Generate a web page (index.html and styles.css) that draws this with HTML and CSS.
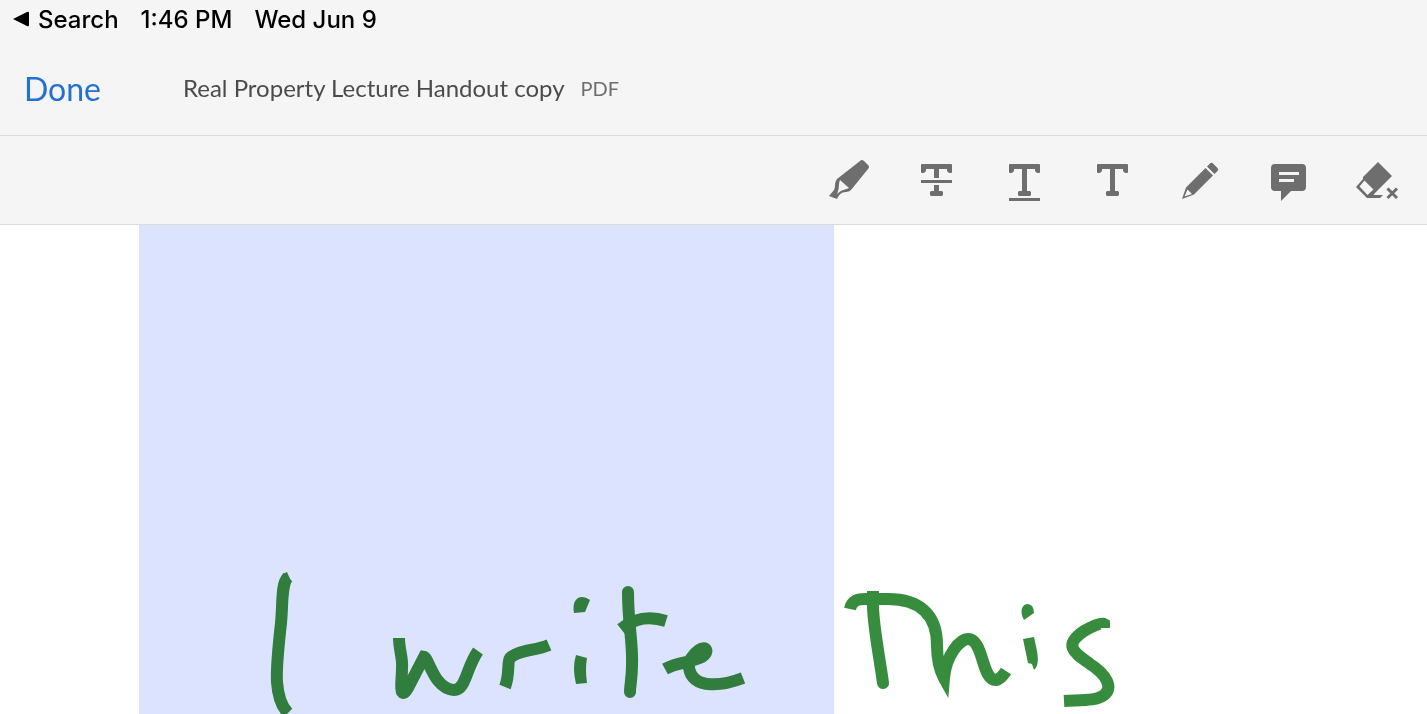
FILE: index.html
```html
<!DOCTYPE html>
<html lang="en">

<head>
    <meta charset="UTF-8">
    <meta name="viewport" content="width=device-width, initial-scale=1.0">
    <title>Real Property Lecture Handout copy</title>
    <link rel="stylesheet" href="styles.css">
</head>

<body>
    <div class="status-bar">
        <a href="#" class="back-link">
            <svg class="back-arrow" viewBox="0 0 16 16" aria-hidden="true"><path d="M0 8 L14 1 Q16 0 16 2 V14 Q16 16 14 15 Z" /></svg>
            Search
        </a>
        <span>1:46 PM</span>
        <span>Wed Jun 9</span>
    </div>

    <header class="title-bar">
        <button type="button" class="done-button">Done</button>
        <div class="file-info">
            <h1 class="file-name">Real Property Lecture Handout copy</h1>
            <span class="file-type">PDF</span>
        </div>
    </header>

    <nav class="toolbar" aria-label="Comment tools">
        <button type="button" class="tool" aria-label="Highlight">
            <svg viewBox="0 0 44 44">
                <path fill-rule="evenodd" d="M33 3 Q35 1 37 3 L41 7 Q43 9 41 11 L24 32 Q22 34 19 34 C14 34 12 37 10 41 L2 38 L7 32 C9 28 7 25 10 21 Z M13 22 C11 27 13 29 10 36 C14 32 17 32 22 30 Z" />
            </svg>
        </button>
        <button type="button" class="tool" aria-label="Strikethrough">
            <svg viewBox="0 0 44 44">
                <path d="M7 6 H36 Q37 6 37 7 V14 Q37 15 36 15 H34 L32 13 V11 H24 V20 H19 V11 H11 V13 L9 15 H7 Q6 15 6 14 V7 Q6 6 7 6 Z M6 22 H37 V25 H6 Z M19 27 H24 V33 H27 L28 34 V37 L27 38 H16 L15 37 V34 L16 33 H19 Z" />
            </svg>
        </button>
        <button type="button" class="tool" aria-label="Underline">
            <svg viewBox="0 0 44 44">
                <path d="M7 6 H36 Q37 6 37 7 V14 Q37 15 36 15 H34 L32 13 V11 H24 V33 H27 L28 34 V37 L27 38 H16 L15 37 V34 L16 33 H19 V11 H11 V13 L9 15 H7 Q6 15 6 14 V7 Q6 6 7 6 Z M6 40 H37 V43 H6 Z" />
            </svg>
        </button>
        <button type="button" class="tool" aria-label="Add text">
            <svg viewBox="0 0 44 44">
                <path d="M7 6 H36 Q37 6 37 7 V14 Q37 15 36 15 H34 L32 13 V11 H24 V33 H27 L28 34 V37 L27 38 H16 L15 37 V34 L16 33 H19 V11 H11 V13 L9 15 H7 Q6 15 6 14 V7 Q6 6 7 6 Z" />
            </svg>
        </button>
        <button type="button" class="tool" aria-label="Draw">
            <svg viewBox="0 0 44 44">
                <path fill-rule="evenodd" d="M31 5.500 Q32.500 4 34 5.500 L38.500 10 Q40 11.500 38.500 13 L35.500 16 L28 8.500 Z M26.500 10 L34 17.500 L15 36.500 L3 41 L7 29.500 Z M8.500 31.500 L5.500 38.500 L13 36 Z" />
            </svg>
        </button>
        <button type="button" class="tool" aria-label="Add comment">
            <svg viewBox="0 0 44 44">
                <path fill-rule="evenodd" d="M8 6 H35 Q39 6 39 10 V29 Q39 33 35 33 H24 L14 43 V33 H8 Q4 33 4 29 V10 Q4 6 8 6 Z M12 14 V17 H32 V14 Z M12 21 V24 H27 V21 Z" />
            </svg>
        </button>
        <button type="button" class="tool" aria-label="Erase">
            <svg viewBox="0 0 44 44">
                <path fill-rule="evenodd" d="M23 4 L37 18 L20 35 L18.500 37 H28 L25 40 H12 L1 29 L8 21 V19 Z M9.500 22.500 L4.500 28.500 L12.500 37 L18.500 31.500 Z" />
                <path class="cross" d="M32.500 30.500 L42 40 M42 30.500 L32.500 40" />
            </svg>
        </button>
    </nav>

    <main class="document">
        <div class="highlight"></div>
        <svg class="ink" viewBox="260 565 870 149" role="img" aria-label="I write This">
            <!-- I -->
            <path d="M288 577 C281 584 283 602 281 623 C278 650 276 668 277 682 C278 696 281 706 288 713" />
            <path class="blot" d="M278 587 Q281 573 287 572 L291 581 Z" />
            <!-- write -->
            <path d="M399 638 C399 650 403 658 402 668 C402 680 400 687 402 692 Q404 695 408 688 L424 657 C429 658 434 689 454 690 C466 690 466 668 478 651" />
            <path d="M505 687 C510 674 507 662 510 658 C518 650 535 651 549 645" />
            <path class="blot" d="M574 613 C572 603 576 597 582 597 Q586 597 590 600 L585 612 Z" />
            <path class="blot" d="M576 655 L587 658 Q585 669 587 683 L576 684 Q572 668 576 655 Z" />
            <path class="round" d="M628 592 C628 625 633 642 632 665 C632 678 630 686 630 692" />
            <path d="M666 621 C650 616 636 617 621 629" />
            <path d="M665 669 C678 662 690 663 702 657 C710 652 706 645 699 650 C693 654 688 661 689 668 C693 691 725 685 743 678" />
            <!-- This -->
            <path d="M850 609 C852 600 858 599 866 599 L888 599 C919 599 937 614 937 645 C937 660 939 669 944 678 C946 655 960 639 968 639 C984 639 981 680 996 680 Q1001 679 1006 671" />
            <path d="M873 591 L873 602" />
            <path class="round" d="M873 602 C872 620 880 660 883 683" />
            <path class="blot" d="M1024 620 C1019 611 1022 604 1028 604 Q1034 605 1034 613 Z" />
            <path class="blot" d="M1023 639 L1034 637 C1037 651 1041 664 1034 670 L1032 664 L1028 663 Z" />
            <path d="M1104 628 L1104 624 C1101 622 1091 627 1084 631 C1062 646 1075 653 1090 664 C1106 674 1114 688 1104 695 C1096 701 1083 700 1064 701" />
        </svg>
    </main>
</body>

</html>
```
FILE: styles.css
```css
* {
    box-sizing: border-box;
}

body {
    margin: 0;
    min-height: 100vh;
    display: flex;
    flex-direction: column;
    background-color: #fff;
    font-family: Lato, sans-serif;
}

.status-bar {
    display: flex;
    align-items: center;
    gap: 22px;
    height: 38px;
    padding: 0 13px;
    background-color: #f5f5f5;
    color: #000;
    font-family: Inter, sans-serif;
    font-size: 24px;
    font-weight: 500;
    white-space: nowrap;
}

.back-link {
    display: flex;
    align-items: center;
    gap: 9px;
    color: inherit;
    text-decoration: none;
}

.back-arrow {
    width: 16px;
    height: 16px;
}

.title-bar {
    display: flex;
    align-items: center;
    height: 98px;
    padding: 4px 24px 0;
    border-bottom: 1px solid #dcdcdc;
    background-color: #f5f5f5;
    white-space: nowrap;
}

.done-button {
    padding: 0;
    border: none;
    background: none;
    color: #2571d3;
    font-family: inherit;
    font-size: 32px;
    cursor: pointer;
}

.file-info {
    display: flex;
    align-items: center;
    gap: 16px;
    margin-left: 82px;
    padding-bottom: 2px;
}

.file-name {
    margin: 0;
    color: #4b4b4b;
    font-size: 24px;
    font-weight: 400;
}

.file-type {
    color: #6e6e6e;
    font-size: 20px;
}

.toolbar {
    display: flex;
    justify-content: flex-end;
    height: 89px;
    padding-right: 6px;
    border-bottom: 1px solid #dcdcdc;
    background-color: #f5f5f5;
}

.tool {
    display: flex;
    align-items: center;
    justify-content: center;
    width: 88px;
    padding: 0;
    border: none;
    background: none;
    cursor: pointer;
}

.tool svg {
    width: 44px;
    height: 44px;
    fill: #6e6e6e;
}

.tool .cross {
    fill: none;
    stroke: #6e6e6e;
    stroke-width: 3;
}

.document {
    position: relative;
    flex: 1;
    display: flex;
    overflow: hidden;
}

.highlight {
    width: 695px;
    margin-left: 139px;
    background-color: #dce3fe;
}

/* Pen strokes lie over the page and darken where they cross the highlight */
.ink {
    position: absolute;
    top: 340px;
    left: 260px;
    width: 870px;
    height: 149px;
    fill: none;
    stroke: #388c3e;
    stroke-width: 12;
    stroke-miterlimit: 8;
    mix-blend-mode: multiply;
}

.ink .round {
    stroke-linecap: round;
}

.ink .blot {
    fill: #388c3e;
    stroke: none;
}
```
